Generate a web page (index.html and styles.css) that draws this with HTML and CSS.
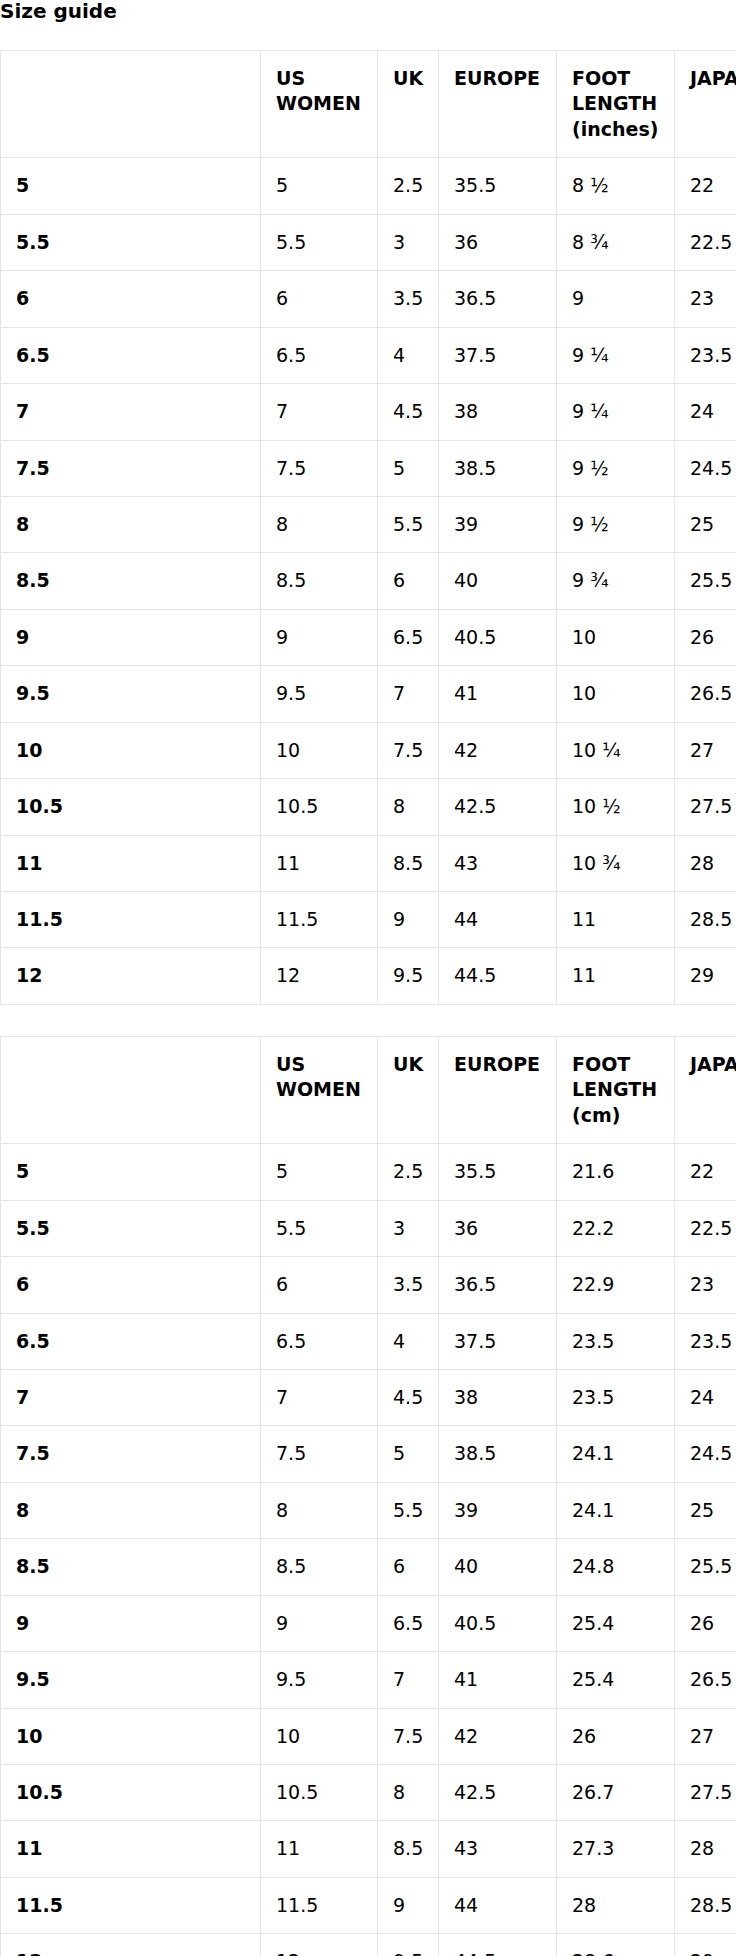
FILE: index.html
```html
<!DOCTYPE html>
<html lang="en">
<head>
<meta charset="utf-8">
<title>Size guide</title>
<link rel="stylesheet" href="styles.css">
</head>
<body>
<h2 class="title">Size guide</h2>

<div class="table-wrap">
<table class="size-table">
<colgroup><col class="c-label"><col class="c-us"><col class="c-uk"><col class="c-eu"><col class="c-foot"><col class="c-jp"></colgroup>
<thead>
<tr><th></th><th>US<br>WOMEN</th><th>UK</th><th>EUROPE</th><th>FOOT<br>LENGTH<br>(inches)</th><th>JAPAN</th></tr>
</thead>
<tbody>
<tr><th>5</th><td>5</td><td>2.5</td><td>35.5</td><td>8 ½</td><td>22</td></tr>
<tr><th>5.5</th><td>5.5</td><td>3</td><td>36</td><td>8 ¾</td><td>22.5</td></tr>
<tr><th>6</th><td>6</td><td>3.5</td><td>36.5</td><td>9</td><td>23</td></tr>
<tr><th>6.5</th><td>6.5</td><td>4</td><td>37.5</td><td>9 ¼</td><td>23.5</td></tr>
<tr><th>7</th><td>7</td><td>4.5</td><td>38</td><td>9 ¼</td><td>24</td></tr>
<tr><th>7.5</th><td>7.5</td><td>5</td><td>38.5</td><td>9 ½</td><td>24.5</td></tr>
<tr><th>8</th><td>8</td><td>5.5</td><td>39</td><td>9 ½</td><td>25</td></tr>
<tr><th>8.5</th><td>8.5</td><td>6</td><td>40</td><td>9 ¾</td><td>25.5</td></tr>
<tr><th>9</th><td>9</td><td>6.5</td><td>40.5</td><td>10</td><td>26</td></tr>
<tr><th>9.5</th><td>9.5</td><td>7</td><td>41</td><td>10</td><td>26.5</td></tr>
<tr><th>10</th><td>10</td><td>7.5</td><td>42</td><td>10 ¼</td><td>27</td></tr>
<tr><th>10.5</th><td>10.5</td><td>8</td><td>42.5</td><td>10 ½</td><td>27.5</td></tr>
<tr><th>11</th><td>11</td><td>8.5</td><td>43</td><td>10 ¾</td><td>28</td></tr>
<tr><th>11.5</th><td>11.5</td><td>9</td><td>44</td><td>11</td><td>28.5</td></tr>
<tr><th>12</th><td>12</td><td>9.5</td><td>44.5</td><td>11</td><td>29</td></tr>
</tbody>
</table>
</div>

<div class="table-wrap">
<table class="size-table">
<colgroup><col class="c-label"><col class="c-us"><col class="c-uk"><col class="c-eu"><col class="c-foot"><col class="c-jp"></colgroup>
<thead>
<tr><th></th><th>US<br>WOMEN</th><th>UK</th><th>EUROPE</th><th>FOOT<br>LENGTH<br>(cm)</th><th>JAPAN</th></tr>
</thead>
<tbody>
<tr><th>5</th><td>5</td><td>2.5</td><td>35.5</td><td>21.6</td><td>22</td></tr>
<tr><th>5.5</th><td>5.5</td><td>3</td><td>36</td><td>22.2</td><td>22.5</td></tr>
<tr><th>6</th><td>6</td><td>3.5</td><td>36.5</td><td>22.9</td><td>23</td></tr>
<tr><th>6.5</th><td>6.5</td><td>4</td><td>37.5</td><td>23.5</td><td>23.5</td></tr>
<tr><th>7</th><td>7</td><td>4.5</td><td>38</td><td>23.5</td><td>24</td></tr>
<tr><th>7.5</th><td>7.5</td><td>5</td><td>38.5</td><td>24.1</td><td>24.5</td></tr>
<tr><th>8</th><td>8</td><td>5.5</td><td>39</td><td>24.1</td><td>25</td></tr>
<tr><th>8.5</th><td>8.5</td><td>6</td><td>40</td><td>24.8</td><td>25.5</td></tr>
<tr><th>9</th><td>9</td><td>6.5</td><td>40.5</td><td>25.4</td><td>26</td></tr>
<tr><th>9.5</th><td>9.5</td><td>7</td><td>41</td><td>25.4</td><td>26.5</td></tr>
<tr><th>10</th><td>10</td><td>7.5</td><td>42</td><td>26</td><td>27</td></tr>
<tr><th>10.5</th><td>10.5</td><td>8</td><td>42.5</td><td>26.7</td><td>27.5</td></tr>
<tr><th>11</th><td>11</td><td>8.5</td><td>43</td><td>27.3</td><td>28</td></tr>
<tr><th>11.5</th><td>11.5</td><td>9</td><td>44</td><td>28</td><td>28.5</td></tr>
<tr><th>12</th><td>12</td><td>9.5</td><td>44.5</td><td>28.6</td><td>29</td></tr>
</tbody>
</table>
</div>
</body>
</html>
```

FILE: styles.css
```css
html, body {
  margin: 0;
  padding: 0;
  background: #fff;
  color: #000;
  font-family: "DejaVu Sans", "Liberation Sans", sans-serif;
}

.title {
  margin: 0 0 27px 0;
  font-size: 20px;
  line-height: 23px;
  font-weight: bold;
}

.table-wrap {
  width: 736px;
  overflow: hidden;
  margin-bottom: 31px;
}

.size-table {
  border-collapse: collapse;
  table-layout: fixed;
  width: 774px;
  font-size: 19px;
  line-height: 25.44px;
}

.c-label { width: 260px; }
.c-us { width: 117px; }
.c-uk { width: 61px; }
.c-eu { width: 118px; }
.c-foot { width: 118px; }
.c-jp { width: 100px; }

.size-table th,
.size-table td {
  border: 1px solid #e4e4e4;
  padding: 15px;
  text-align: left;
  vertical-align: top;
  white-space: nowrap;
}

.size-table th {
  font-weight: bold;
}

.size-table td {
  font-weight: normal;
}
```
